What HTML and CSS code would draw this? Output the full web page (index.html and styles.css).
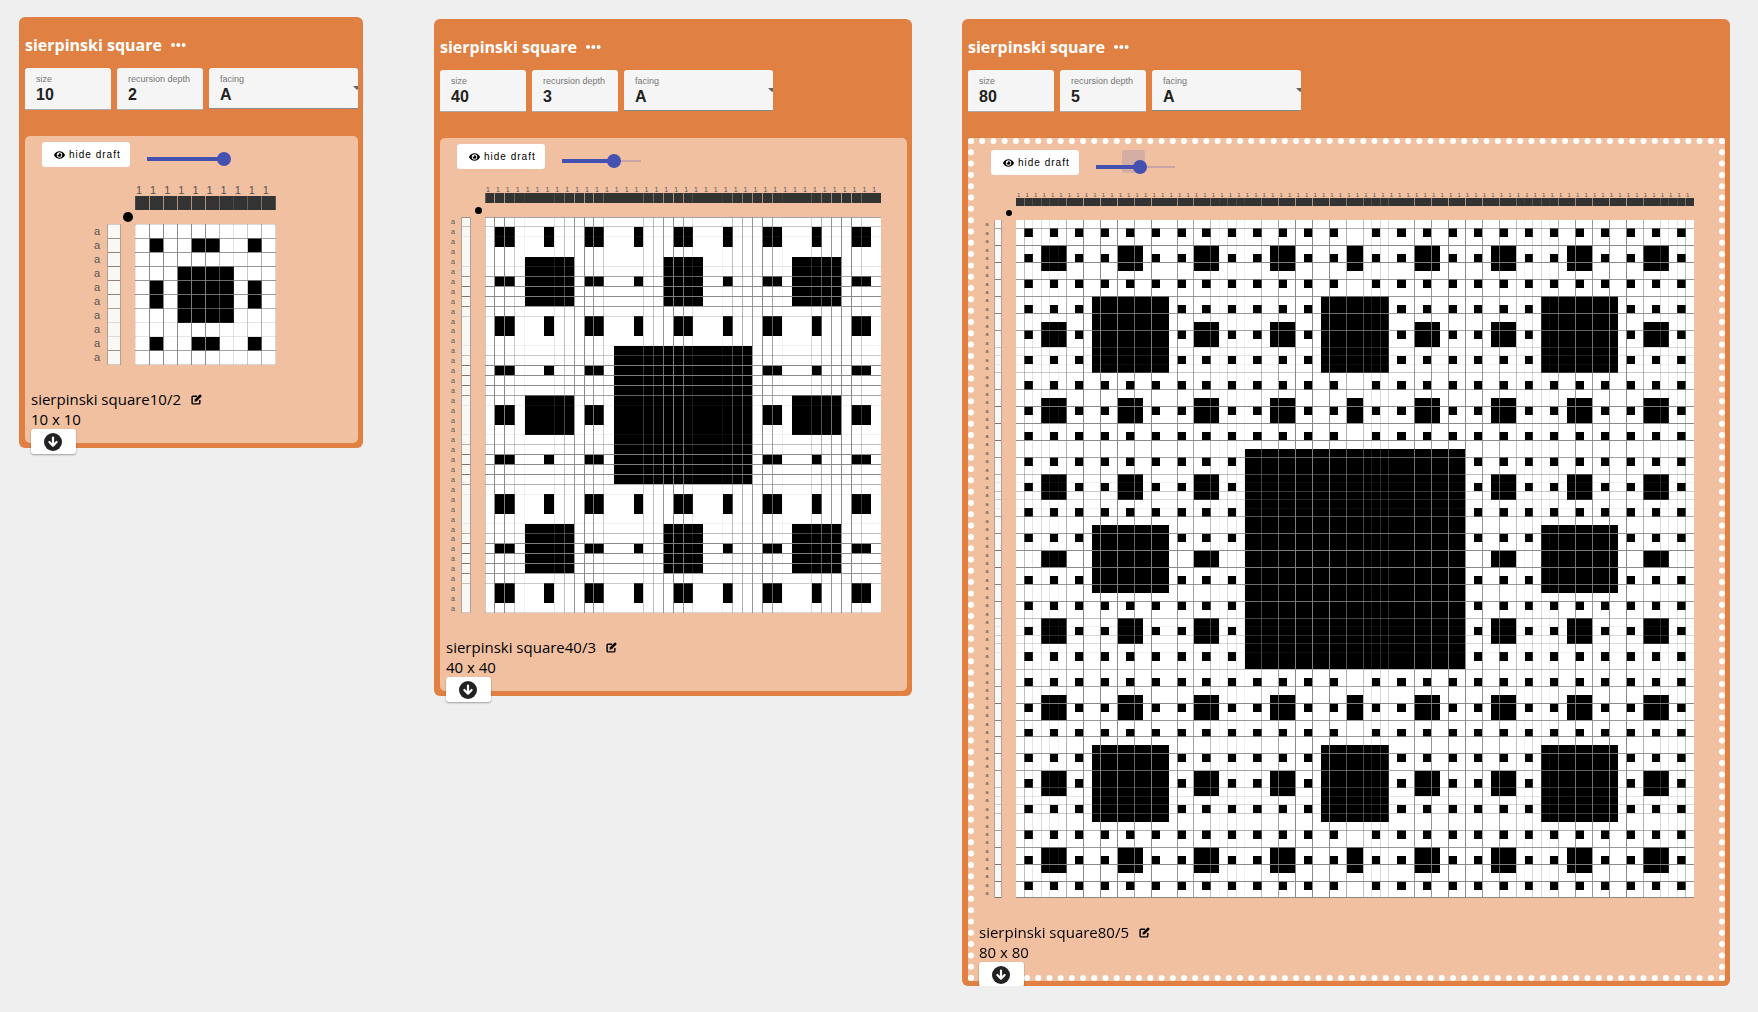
FILE: index.html
```html
<!DOCTYPE html>
<html lang="en">
<head>
<meta charset="utf-8">
<title>sierpinski square</title>
<link rel="stylesheet" href="styles.css">
</head>
<body>
<svg class="sprite" aria-hidden="true">
  <symbol id="eye" viewBox="0 0 576 512"><path d="M572.52 241.4C518.29 135.59 410.93 64 288 64S57.68 135.64 3.48 241.41a32.35 32.35 0 0 0 0 29.19C57.71 376.41 165.07 448 288 448s230.32-71.64 284.52-177.41a32.35 32.35 0 0 0 0-29.19zM288 400a144 144 0 1 1 144-144 143.93 143.93 0 0 1-144 144zm0-240a95.31 95.31 0 0 0-25.31 3.79 47.85 47.85 0 0 1-66.9 66.9A95.78 95.78 0 1 0 288 160z"/></symbol>
  <symbol id="dots" viewBox="0 0 15 4"><circle cx="2" cy="2" r="2"/><circle cx="7.3" cy="2" r="2"/><circle cx="12.6" cy="2" r="2"/></symbol>
  <symbol id="edit" viewBox="0 0 20 20"><path d="M11 4H3.5A1.5 1.5 0 0 0 2 5.500V16.500A1.500 1.500 0 0 0 3.500 18H14.500A1.500 1.500 0 0 0 16 16.500V11" fill="none" stroke="currentColor" stroke-width="2.600"/><path d="M15.500 1.200a1.500 1.500 0 0 1 2.100 0l1.300 1.300a1.500 1.500 0 0 1 0 2.100L10.500 13l-4.300 1.300L7.200 9.500z"/></symbol>
  <symbol id="down" viewBox="0 0 18 18"><circle cx="9" cy="9" r="9"/><path d="M9 4.500V12M5.400 9 9 12.700 12.600 9" fill="none" stroke="#fff" stroke-width="2.200" stroke-linecap="round" stroke-linejoin="round"/></symbol>
</svg>

<main class="workspace">
  <section class="op op-small">
    <header class="op-header">
      <h2>sierpinski square</h2>
      <button class="icon-button" type="button" aria-label="options"><svg class="icon-dots"><use href="#dots"/></svg></button>
    </header>
    <div class="fields">
      <div class="field"><label for="size-1">size</label><input id="size-1" type="text" value="10"></div>
      <div class="field"><label for="depth-1">recursion depth</label><input id="depth-1" type="text" value="2"></div>
      <div class="field field-select"><label for="facing-1">facing</label><select id="facing-1"><option>A</option><option>B</option></select></div>
    </div>
    <div class="panel">
      <div class="controls">
        <button class="toggle" type="button"><svg class="icon-eye"><use href="#eye"/></svg>hide draft</button>
        <div class="zoom"><input class="zoom-full" type="range" min="0" max="77" value="77" aria-label="draft zoom"></div>
      </div>
      <div class="draft" data-size="10" data-depth="2" data-width="141" data-cell="14"
        data-cols="29999952463" data-rows="37888862273"></div>
      <footer class="info">
        <div class="name">sierpinski square10/2 <button class="icon-button" type="button" aria-label="rename"><svg class="icon-edit"><use href="#edit"/></svg></button></div>
        <div>10 x 10</div>
        <button class="download" type="button" aria-label="download"><svg class="icon-down"><use href="#down"/></svg></button>
      </footer>
    </div>
  </section>

  <section class="op op-medium">
    <header class="op-header">
      <h2>sierpinski square</h2>
      <button class="icon-button" type="button" aria-label="options"><svg class="icon-dots"><use href="#dots"/></svg></button>
    </header>
    <div class="fields">
      <div class="field"><label for="size-2">size</label><input id="size-2" type="text" value="40"></div>
      <div class="field"><label for="depth-2">recursion depth</label><input id="depth-2" type="text" value="3"></div>
      <div class="field field-select"><label for="facing-2">facing</label><select id="facing-2"><option>A</option><option>B</option></select></div>
    </div>
    <div class="panel">
      <div class="controls">
        <button class="toggle" type="button"><svg class="icon-eye"><use href="#eye"/></svg>hide draft</button>
        <div class="zoom"><input class="zoom-two-thirds" type="range" min="0" max="77" value="52" aria-label="draft zoom"></div>
      </div>
      <div class="draft" data-size="40" data-depth="3" data-width="396" data-cell="10"
        data-cols="49941002589840004589820015689710036899400" data-rows="74100279983001499971001599961001599984003"></div>
      <footer class="info">
        <div class="name">sierpinski square40/3 <button class="icon-button" type="button" aria-label="rename"><svg class="icon-edit"><use href="#edit"/></svg></button></div>
        <div>40 x 40</div>
        <button class="download" type="button" aria-label="download"><svg class="icon-down"><use href="#down"/></svg></button>
      </footer>
    </div>
  </section>

  <section class="op op-large">
    <header class="op-header">
      <h2>sierpinski square</h2>
      <button class="icon-button" type="button" aria-label="options"><svg class="icon-dots"><use href="#dots"/></svg></button>
    </header>
    <div class="fields">
      <div class="field"><label for="size-3">size</label><input id="size-3" type="text" value="80"></div>
      <div class="field"><label for="depth-3">recursion depth</label><input id="depth-3" type="text" value="5"></div>
      <div class="field field-select"><label for="facing-3">facing</label><select id="facing-3"><option>A</option><option>B</option></select></div>
    </div>
    <div class="panel panel-selected">
      <svg class="selection" aria-hidden="true">
        <line x1="0" y1="0" x2="100%" y2="0" pathLength="67"/>
        <line x1="0" y1="100%" x2="100%" y2="100%" pathLength="67"/>
        <line x1="0" y1="0" x2="0" y2="100%" pathLength="74"/>
        <line x1="100%" y1="0" x2="100%" y2="100%" pathLength="74"/>
      </svg>
      <div class="controls">
        <button class="toggle" type="button"><svg class="icon-eye"><use href="#eye"/></svg>hide draft</button>
        <div class="zoom zoom-focused"><input class="zoom-half" type="range" min="0" max="77" value="44" aria-label="draft zoom"></div>
      </div>
      <div class="draft" data-size="80" data-depth="5" data-width="678" data-cell="8"
        data-cols="052321609090907090080705132105070909090605233008080909080705133160808090906032250700707" data-rows="060909080808070321407090909070514316080909080805133105070908080807042340608090909"></div>
      <footer class="info">
        <div class="name">sierpinski square80/5 <button class="icon-button" type="button" aria-label="rename"><svg class="icon-edit"><use href="#edit"/></svg></button></div>
        <div>80 x 80</div>
        <button class="download" type="button" aria-label="download"><svg class="icon-down"><use href="#down"/></svg></button>
      </footer>
    </div>
  </section>
</main>
<script src="draft.js"></script>
</body>
</html>
```

FILE: draft.js
```js
// Splits a side into outer, middle and outer parts, down to the given depth.
// Each cell gets one entry per level: true where it lies in the middle part.
function levels(size, depth) {
  const out = Array.from({ length: size }, () => []);
  function split(start, length, level) {
    if (level === depth || length < 3) return;
    const outer = Math.round(length / 3);
    const middle = length - 2 * outer;
    for (let i = 0; i < middle; i++) out[start + outer + i][level] = true;
    split(start, outer, level + 1);
    split(start + outer, middle, level + 1);
    split(start + outer + middle, outer, level + 1);
  }
  split(0, size, 0);
  return out;
}

function makeCanvas(name, width, height) {
  const canvas = document.createElement('canvas');
  canvas.className = name;
  canvas.width = width;
  canvas.height = height;
  return canvas;
}

function makeLabels(name, text, count) {
  const box = document.createElement('div');
  box.className = name;
  for (let i = 0; i < count; i++) {
    const span = document.createElement('span');
    span.textContent = text;
    box.append(span);
  }
  return box;
}

function drawLines(ctx, lines, weights, colour, horizontal, length) {
  ctx.fillStyle = colour;
  lines.forEach((line, i) => {
    ctx.globalAlpha = Number(weights[i] || 0) / 9;
    const at = Math.min(line, lines[lines.length - 1] - 1);
    if (horizontal) ctx.fillRect(0, at, length, 1);
    else ctx.fillRect(at, 0, 1, length);
  });
  ctx.globalAlpha = 1;
}

document.querySelectorAll('.draft').forEach((draft) => {
  const size = Number(draft.dataset.size);
  const width = Number(draft.dataset.width);
  const cell = Number(draft.dataset.cell);
  const { cols, rows } = draft.dataset;
  const parts = levels(size, Number(draft.dataset.depth));
  const stops = Array.from({ length: size + 1 }, (_, i) => i * width / size);
  const edges = stops.map(Math.round);
  const lines = stops.map(Math.floor);

  const warp = makeCanvas('warp', width, cell);
  let ctx = warp.getContext('2d');
  ctx.fillStyle = '#333';
  ctx.fillRect(0, 0, width, cell);
  drawLines(ctx, lines, cols, '#b09480', false, cell);

  const weft = makeCanvas('weft', cell, width);
  ctx = weft.getContext('2d');
  ctx.fillStyle = '#faf8f4';
  ctx.fillRect(0, 0, cell, width);
  drawLines(ctx, lines, rows, '#857265', true, cell);
  ctx.fillStyle = '#b0a298';
  ctx.fillRect(0, 0, 1, width);
  ctx.fillRect(cell - 1, 0, 1, width);

  const grid = makeCanvas('grid', width, width);
  ctx = grid.getContext('2d');
  ctx.fillStyle = '#fff';
  ctx.fillRect(0, 0, width, width);
  ctx.fillStyle = '#000';
  for (let y = 0; y < size; y++) {
    for (let x = 0; x < size; x++) {
      if (parts[y].some((middle, level) => middle && parts[x][level])) {
        ctx.fillRect(edges[x], edges[y], edges[x + 1] - edges[x], edges[y + 1] - edges[y]);
      }
    }
  }
  drawLines(ctx, lines, cols, 'rgba(132,132,132,0.95)', false, width);
  drawLines(ctx, lines, rows, 'rgba(132,132,132,0.95)', true, width);

  const corner = document.createElement('i');
  corner.className = 'origin';
  draft.append(
    makeLabels('warp-labels', '1', size), warp, corner,
    makeLabels('weft-labels', 'a', size), weft, grid
  );
});
```

FILE: styles.css
```css
* {
  box-sizing: border-box;
}

body {
  margin: 0;
  background: #efefef;
  color: #000;
  font-family: "Open Sans", "Noto Sans", sans-serif;
}

button,
input,
select {
  margin: 0;
  padding: 0;
  border: 0;
  font: inherit;
  color: inherit;
  background: none;
}

svg {
  display: block;
  fill: currentColor;
}

.sprite {
  display: none;
}

.workspace {
  display: flex;
  align-items: flex-start;
}

.op {
  flex: none;
  padding: 0 5px 5px 6px;
  border-radius: 6px;
  background: #e08143;
}

.op-small {
  margin: 17px 71px 0 19px;
}

.op-medium {
  margin: 19px 50px 0 0;
}

.op-large {
  margin-top: 19px;
}

.op-header {
  display: flex;
  align-items: center;
  gap: 9px;
  height: 51px;
  padding-top: 4px;
  color: #fff;
}

.op-header h2 {
  margin: 0;
  font-size: 16px;
  line-height: 20px;
}

.icon-button {
  display: inline-block;
}

.icon-dots {
  width: 15px;
  height: 4px;
}

.fields {
  display: flex;
  align-items: flex-start;
  gap: 6px;
  height: 68px;
}

.field {
  width: 86px;
  height: 42px;
  padding: 4px 0 0 11px;
  border-bottom: 1px solid #aaa;
  border-radius: 3px 3px 0 0;
  background: #f5f5f5;
  color: #222;
  font-family: "Liberation Sans", Arial, sans-serif;
}

.field label {
  display: block;
  color: #777;
  font-size: 9px;
  line-height: 14px;
}

.field input,
.field select {
  display: block;
  width: 100%;
  height: 18px;
  font-size: 16px;
  font-weight: 700;
  line-height: 18px;
  appearance: none;
}

.field-select {
  position: relative;
  width: 149px;
  height: 41px;
  overflow: hidden;
  border-bottom-color: #888;
}

.field-select select {
  height: 16px;
}

.field-select::after {
  content: "";
  position: absolute;
  top: 18px;
  right: -3px;
  border: 4px solid transparent;
  border-top-color: #666;
  border-bottom: 0;
}

.panel {
  position: relative;
  border-radius: 5px;
  background: #f1c0a1;
}

.panel-selected {
  padding: 6px;
}

.selection {
  position: absolute;
  top: 3px;
  left: 3px;
  width: calc(100% - 6px);
  height: calc(100% - 6px);
  overflow: visible;
  pointer-events: none;
}

.selection line {
  stroke: #fff;
  stroke-width: 6;
  stroke-linecap: round;
  stroke-dasharray: 0 1;
}

.controls {
  display: flex;
  align-items: flex-start;
  gap: 10px;
  height: 40px;
  padding: 6px 0 0 17px;
}

.toggle {
  display: flex;
  align-items: center;
  gap: 4px;
  width: 88px;
  height: 25px;
  padding-left: 12px;
  border-radius: 3px;
  background: #fff;
  font-family: "Liberation Sans", Arial, sans-serif;
  font-size: 10px;
  letter-spacing: 1px;
  white-space: nowrap;
}

.icon-eye {
  flex: none;
  width: 11px;
  height: 10px;
}

.zoom {
  position: relative;
  padding-top: 10px;
}

.zoom-focused::before {
  content: "";
  position: absolute;
  top: 0;
  left: 33px;
  width: 23px;
  height: 23px;
  border-radius: 2px;
  background: rgba(68, 81, 177, 0.16);
}

.zoom input {
  position: relative;
  display: block;
  width: 91px;
  height: 14px;
  appearance: none;
  background:
    linear-gradient(#4451b1, #4451b1) 7px 5px / var(--fill) 4px no-repeat,
    linear-gradient(#c8a4a4, #c8a4a4) 7px 6px / 79px 2px no-repeat;
}

.zoom-full {
  --fill: 77px;
}

.zoom-two-thirds {
  --fill: 52px;
}

.zoom-half {
  --fill: 44px;
}

.zoom input::-webkit-slider-thumb {
  width: 14px;
  height: 14px;
  border-radius: 50%;
  appearance: none;
  background: #4451b1;
}

.draft {
  display: grid;
  color: #555;
  font-family: "Liberation Sans", Arial, sans-serif;
}

.op-small .draft {
  grid-template: 20px 14px 14px auto / 20px 14px 14px auto;
  padding: 0 82px 0 62px;
  font-size: 11px;
  --dot: 10px;
}

.op-medium .draft {
  grid-template: 15px 10px 14px auto / 16px 10px 14px auto;
  padding: 0 26px 0 5px;
  font-size: 7px;
  --dot: 7px;
}

.op-large .draft {
  grid-template: 14px 8px 14px auto / 14px 8px 14px auto;
  padding: 0 25px 0 6px;
  font-size: 6px;
  --dot: 6px;
}

.draft canvas {
  display: block;
}

.warp-labels,
.warp,
.grid {
  grid-column: 4;
}

.warp-labels {
  display: flex;
  align-items: flex-end;
  line-height: 1;
}

.warp-labels span {
  flex: 1 0 0;
  width: 0;
  padding-left: 1px;
}

.warp {
  grid-row: 2;
}

.origin {
  grid-area: 3 / 3;
  place-self: center;
  width: var(--dot);
  height: var(--dot);
  border-radius: 50%;
  background: #000;
}

.weft-labels {
  grid-area: 4 / 1;
  display: flex;
  flex-direction: column;
  line-height: 1;
}

.weft-labels span {
  flex: 1 0 0;
  display: flex;
  align-items: center;
  justify-content: center;
  height: 0;
}

.weft {
  grid-area: 4 / 2;
}

.grid {
  grid-row: 4;
}

.info {
  position: relative;
  height: 78px;
  padding: 24px 0 0 6px;
  font-size: 15px;
  line-height: 20px;
}

.panel-selected .info {
  height: 77px;
  padding-left: 5px;
}

.name {
  display: flex;
  align-items: center;
  gap: 10px;
}

.icon-edit {
  width: 11px;
  height: 11px;
}

.download {
  display: flex;
  align-items: center;
  justify-content: center;
  width: 45px;
  height: 25px;
  padding-right: 2px;
  border-radius: 3px;
  background: #fff;
  color: #222;
  box-shadow: 0 1px 2px rgba(0, 0, 0, 0.35);
}

.icon-down {
  width: 18px;
  height: 18px;
}
```
